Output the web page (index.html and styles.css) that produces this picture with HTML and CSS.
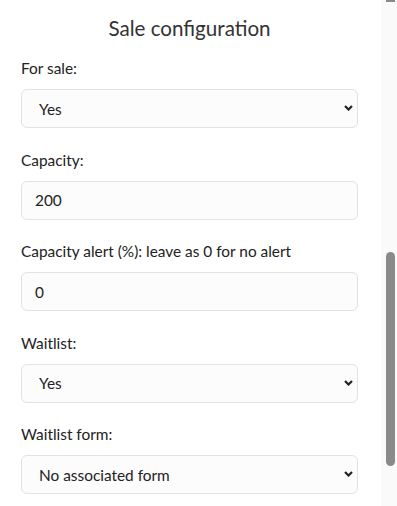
FILE: index.html
```html
<!DOCTYPE html>
<html>
<head>
<meta charset="utf-8">
<link rel="stylesheet" href="styles.css">
</head>
<body>
<div class="page">
  <div class="content">
    <h2 class="title">Sale configuration</h2>
    <div class="group">
      <label class="label">For sale:</label>
      <div class="select-wrap">
        <select class="field select"><option>Yes</option><option>No</option></select>
        <svg class="chev" width="9" height="6" viewBox="0 0 9 6"><path d="M1 1 L4.5 4.5 L8 1" fill="none" stroke="#222" stroke-width="2.2"/></svg>
      </div>
    </div>
    <div class="group">
      <label class="label">Capacity:</label>
      <input class="field input" type="text" value="200">
    </div>
    <div class="group">
      <label class="label">Capacity alert (%): leave as 0 for no alert</label>
      <input class="field input" type="text" value="0">
    </div>
    <div class="group">
      <label class="label">Waitlist:</label>
      <div class="select-wrap">
        <select class="field select"><option>Yes</option><option>No</option></select>
        <svg class="chev" width="9" height="6" viewBox="0 0 9 6"><path d="M1 1 L4.5 4.5 L8 1" fill="none" stroke="#222" stroke-width="2.2"/></svg>
      </div>
    </div>
    <div class="group">
      <label class="label">Waitlist form:</label>
      <div class="select-wrap">
        <select class="field select"><option>No associated form</option></select>
        <svg class="chev" width="9" height="6" viewBox="0 0 9 6"><path d="M1 1 L4.5 4.5 L8 1" fill="none" stroke="#222" stroke-width="2.2"/></svg>
      </div>
    </div>
  </div>
  <div class="scrollbar">
    <div class="arrow"></div>
    <div class="thumb"></div>
  </div>
</div>
</body>
</html>
```
FILE: styles.css
```css
html, body {
  margin: 0;
  padding: 0;
  background: #fff;
}
body {
  font-family: Lato, "Open Sans", sans-serif;
  color: #222;
}
.page {
  display: flex;
  width: 397px;
  height: 506px;
  overflow: hidden;
}
.content {
  width: 381px;
  flex: none;
  padding: 0 23px 0 21px;
  box-sizing: border-box;
}
.title {
  margin: 15px 0 0 0;
  font-size: 20.6px;
  font-weight: 400;
  line-height: 26px;
  text-align: center;
  color: #333;
}
.group {
  margin-top: 17px;
}
.group + .group {
  margin-top: 21.5px;
}
.label {
  display: block;
  font-size: 15.4px;
  line-height: 20px;
  margin-bottom: 11px;
}
.select-wrap {
  position: relative;
}
.field {
  display: block;
  width: 100%;
  height: 39px;
  box-sizing: border-box;
  border: 1px solid #e2e2e2;
  border-radius: 6px;
  background: #fcfcfc;
  font-family: Lato, "Open Sans", sans-serif;
  font-size: 15.4px;
  color: #222;
  margin: 0;
  outline: none;
}
.input {
  padding: 0 13px;
}
.select {
  -webkit-appearance: none;
  appearance: none;
  padding: 0 30px 0 17px;
}
.chev {
  position: absolute;
  right: 5px;
  top: 16px;
  pointer-events: none;
}
.scrollbar {
  width: 16px;
  flex: none;
  background: #fafafa;
  display: flex;
  flex-direction: column;
  align-items: center;
  padding-right: 1px;
  box-sizing: border-box;
}
.arrow {
  width: 9px;
  height: 2px;
  background: #8a8a8a;
  margin-left: 3px;
}
.thumb {
  width: 9px;
  height: 214px;
  margin-top: 250px;
  margin-left: 3px;
  background: #8a8a8a;
  border-radius: 5px;
}
```
